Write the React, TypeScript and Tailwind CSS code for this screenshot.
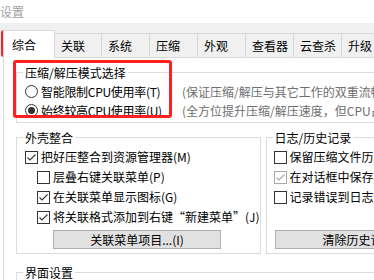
import React from "react";

const FONT = { fontFamily: '"Noto Sans CJK SC", "Noto Sans", sans-serif' };

function Check({ checked, disabled }: { checked?: boolean; disabled?: boolean }) {
  const c = disabled ? "#a8a8a8" : "#333333";
  return (
    <span
      className="w-[13px] h-[13px] shrink-0 border bg-white flex items-center justify-center"
      style={{ borderColor: c }}
    >
      {checked && (
        <svg width="11" height="11" viewBox="0 0 11 11">
          <polyline points="1.5,5.5 4,8 9.5,2.5" fill="none" stroke={c} strokeWidth="1.1" />
        </svg>
      )}
    </span>
  );
}

function Radio({ checked }: { checked?: boolean }) {
  return (
    <span className="w-[13px] h-[13px] shrink-0 rounded-full border border-[#333333] bg-white flex items-center justify-center">
      {checked && <span className="w-[7px] h-[7px] rounded-full bg-[#333333]" />}
    </span>
  );
}

function Legend({ children }: { children: React.ReactNode }) {
  return (
    <legend className="ml-[6px] px-[2px] h-[15px] leading-[15px] text-[12px] text-black">{children}</legend>
  );
}

const tabs = [
  { label: "关联", w: "w-[47px]" },
  { label: "系统", w: "w-[48px]" },
  { label: "压缩", w: "w-[48px]" },
  { label: "外观", w: "w-[48px]" },
  { label: "查看器", w: "w-[48px]" },
  { label: "云查杀", w: "w-[48px]" },
  { label: "升级", w: "w-[48px]" },
];

export default function App() {
  return (
    <div className="relative w-[374px] h-[280px] overflow-hidden bg-white text-[12px] text-black" style={FONT}>
      {/* title */}
      <div className="h-[23px] leading-[23px] text-[12px] text-[#a0a0a0] whitespace-nowrap">设置</div>

      {/* tab strip */}
      <div className="h-[34px] bg-[#f0f0f0] flex items-end pl-[3px] whitespace-nowrap">
        <div className="relative z-10 -mb-px h-[28px] w-[52px] shrink-0 bg-white border-l border-t border-r border-[#d9d9d9] flex items-center pl-[8px]">
          综合
        </div>
        {tabs.map((t) => (
          <div
            key={t.label}
            className={`${t.w} h-[24px] shrink-0 border-t border-r border-[#d9d9d9] bg-[#f0f0f0] flex items-center pl-[6px] pt-[1px]`}
          >
            {t.label}
          </div>
        ))}
      </div>

      {/* panel */}
      <div className="ml-[3px] h-[230px] border-t border-l border-[#d9d9d9] bg-white pl-[12px] pt-[7px] flex flex-col overflow-hidden">
        {/* group 1 */}
        <fieldset className="w-[420px] shrink-0 border border-[#dcdcdc] pb-[2px]">
          <Legend>压缩/解压模式选择</Legend>
          <div className="mt-[2px]">
            {[
              { l: "智能限制CPU使用率(T)", d: "(保证压缩/解压与其它工作的双重流畅)", c: false },
              { l: "始终较高CPU使用率(U)", d: "(全方位提升压缩/解压速度，但CPU占用较高)", c: true },
            ].map((r) => (
              <div key={r.l} className="h-[19px] flex items-center whitespace-nowrap">
                <div className="w-[165px] shrink-0 flex items-center pl-[8px] gap-[3px]">
                  <Radio checked={r.c} />
                  <span className="tracking-[-0.3px]">{r.l}</span>
                </div>
                <span className="text-[#6e6e6e]">{r.d}</span>
              </div>
            ))}
          </div>
        </fieldset>

        {/* group 2 + 3 */}
        <div className="mt-[7px] flex gap-[5px] shrink-0">
          <fieldset className="w-[243px] shrink-0 border border-[#dcdcdc] pb-[4px] overflow-hidden">
            <Legend>外壳整合</Legend>
            <div className="mt-[2px] whitespace-nowrap">
              <div className="h-[20px] flex items-center gap-[3px] pl-[8px]">
                <Check checked />
                <span>把好压整合到资源管理器(M)</span>
              </div>
              <div className="h-[20px] flex items-center gap-[3px] pl-[20px]">
                <Check />
                <span>层叠右键关联菜单(P)</span>
              </div>
              <div className="h-[20px] flex items-center gap-[3px] pl-[20px]">
                <Check checked />
                <span>在关联菜单显示图标(G)</span>
              </div>
              <div className="h-[20px] flex items-center gap-[3px] pl-[20px]">
                <Check checked />
                <span>将关联格式添加到右键“新建菜单”(J)</span>
              </div>
              <div className="mt-[3px] ml-[36px] w-[168px] h-[19px] bg-[#e1e1e1] border border-[#adadad] flex items-center justify-center">
                关联菜单项目...(I)
              </div>
            </div>
          </fieldset>
          <fieldset className="w-[200px] shrink-0 border border-[#dcdcdc] pb-[4px] overflow-hidden">
            <Legend>日志/历史记录</Legend>
            <div className="mt-[2px] whitespace-nowrap">
              <div className="h-[20px] flex items-center gap-[3px] pl-[7px]">
                <Check />
                <span>保留压缩文件历史记录</span>
              </div>
              <div className="h-[20px] flex items-center gap-[3px] pl-[7px]">
                <Check checked disabled />
                <span>在对话框中保存历史记录</span>
              </div>
              <div className="h-[20px] flex items-center gap-[3px] pl-[7px]">
                <Check />
                <span>记录错误到日志</span>
              </div>
              <div className="h-[20px]" />
              <div className="mt-[3px] ml-[8px] w-[168px] h-[19px] bg-[#e1e1e1] border border-[#adadad] flex items-center justify-center">
                清除历史记录
              </div>
            </div>
          </fieldset>
        </div>

        {/* group 4 */}
        <fieldset className="mt-[11px] w-[420px] h-[60px] shrink-0 border border-[#dcdcdc]">
          <Legend>界面设置</Legend>
        </fieldset>
      </div>

      {/* red highlight boxes */}
      <div className="absolute left-[1px] top-[30px] w-[54px] h-[27px] border-[3px] border-[#ff1f1f] rounded-[3px] pointer-events-none" />
      <div className="absolute left-[13px] top-[60px] w-[159px] h-[58px] border-[3px] border-[#ff1f1f] rounded-[3px] pointer-events-none" />
    </div>
  );
}
